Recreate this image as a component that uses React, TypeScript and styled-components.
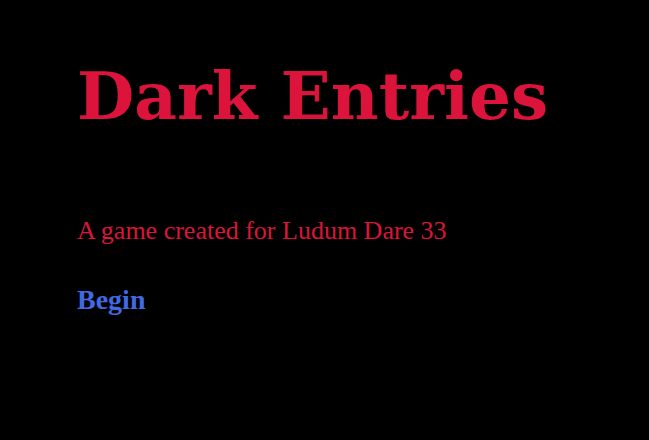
import styled, { createGlobalStyle } from 'styled-components';

const GlobalStyle = createGlobalStyle`
  html, body {
    margin: 0;
    height: 100%;
    background: #000;
  }
  #root {
    height: 100%;
  }
`;

const App = () => {
  return (
    <>
      <GlobalStyle />
      <Screen>
        <Title>Dark Entries</Title>
        <Tagline>A game created for Ludum Dare 33</Tagline>
        <BeginLink href="#">Begin</BeginLink>
      </Screen>
    </>
  );
};

export default App;

const Screen = styled.main`
  height: 100%;
  box-sizing: border-box;
  padding: 57px 0 0 77px;
  display: flex;
  flex-direction: column;
  align-items: flex-start;
  font-family: "Liberation Serif", Georgia, serif;
  background: #000;
`;

const Title = styled.h1`
  margin: 0;
  font-family: "DejaVu Serif", Georgia, serif;
  font-size: 66px;
  line-height: 78px;
  font-weight: bold;
  color: #dc143c;
`;

const Tagline = styled.p`
  margin: 83px 0 0;
  font-size: 26px;
  line-height: 1;
  color: #dc143c;
`;

const BeginLink = styled.a`
  margin-top: 42px;
  font-size: 28px;
  line-height: 1;
  font-weight: bold;
  color: #4169e1;
  text-decoration: none;
`;
